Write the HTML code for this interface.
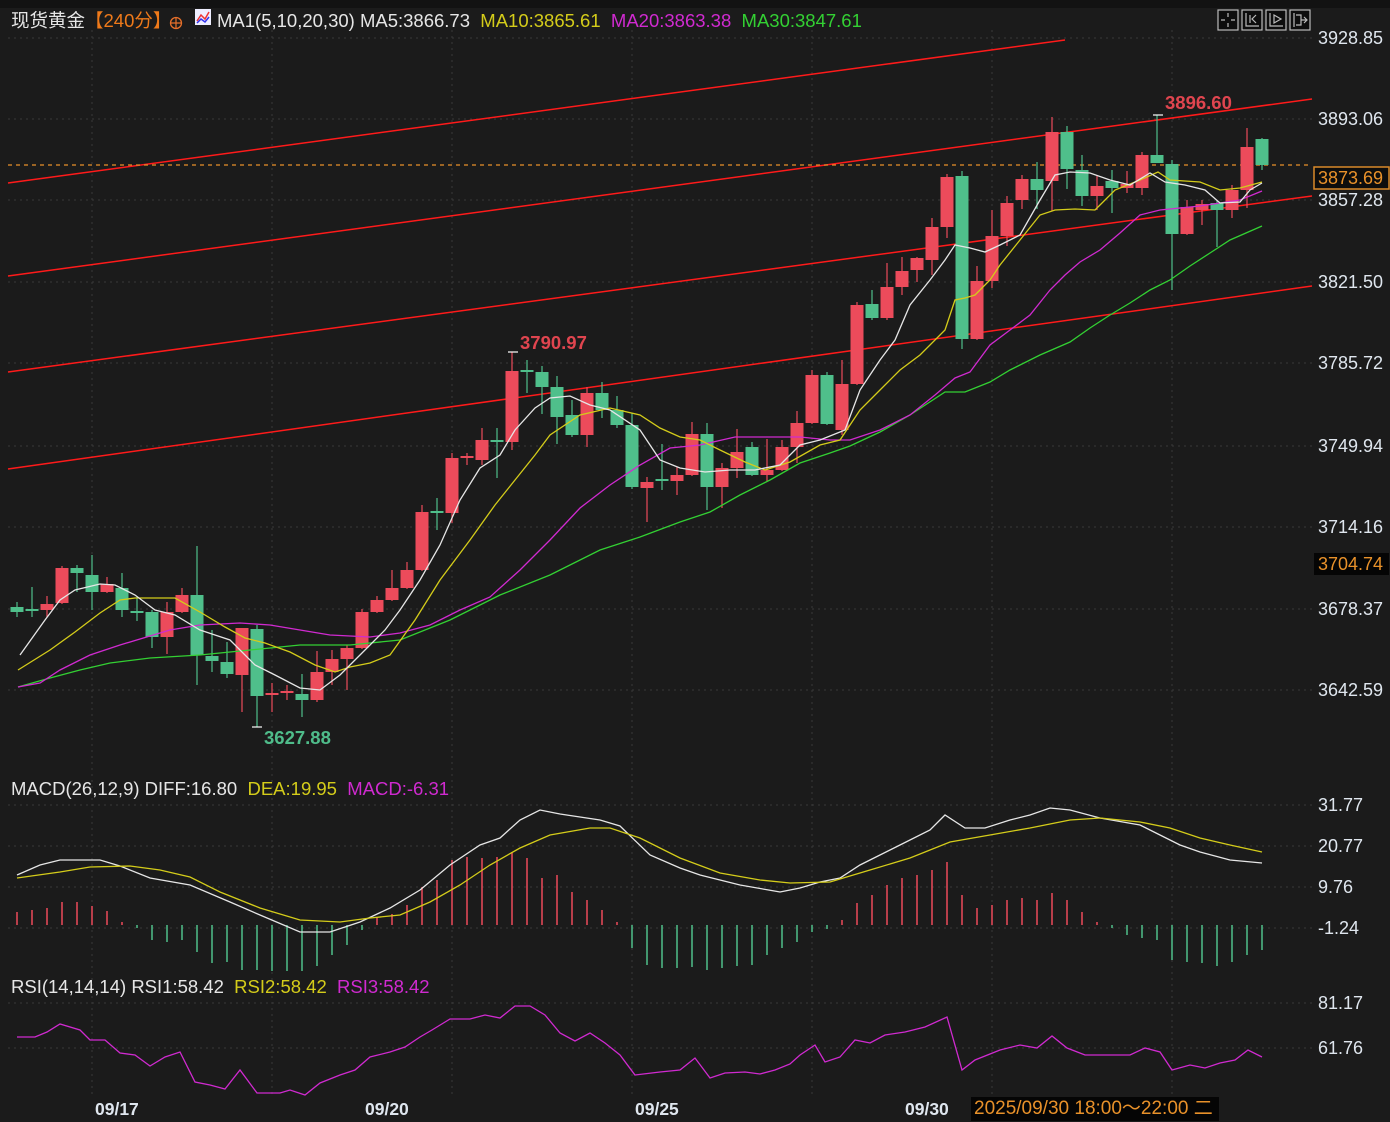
<!DOCTYPE html>
<html><head><meta charset="utf-8"><style>
html,body{margin:0;padding:0;background:#1b1b1b;}
body{width:1390px;height:1122px;overflow:hidden;position:relative;font-family:"Liberation Sans","Noto Sans CJK SC",sans-serif;}
svg{position:absolute;left:0;top:0;}
.t{position:absolute;font-size:18.5px;white-space:nowrap;line-height:20px;}
.ax{position:absolute;left:1318px;font-size:18px;color:#dfe6ee;line-height:18px;}
.xl{position:absolute;top:1099px;font-size:17.5px;font-weight:bold;color:#dfe6ee;}
</style></head><body>
<svg width="1390" height="1122" id="s">
<rect x="0" y="0" width="1390" height="8" fill="#121212"/>
<g stroke="#3a3a3a" stroke-width="1" stroke-dasharray="2,4">
<line x1="8" y1="38" x2="1312" y2="38"/><line x1="8" y1="119" x2="1312" y2="119"/><line x1="8" y1="200" x2="1312" y2="200"/><line x1="8" y1="282" x2="1312" y2="282"/><line x1="8" y1="363" x2="1312" y2="363"/><line x1="8" y1="446" x2="1312" y2="446"/><line x1="8" y1="527" x2="1312" y2="527"/><line x1="8" y1="609" x2="1312" y2="609"/><line x1="8" y1="690" x2="1312" y2="690"/>
<line x1="8" y1="805" x2="1312" y2="805"/><line x1="8" y1="846" x2="1312" y2="846"/><line x1="8" y1="887" x2="1312" y2="887"/><line x1="8" y1="928" x2="1312" y2="928"/>
<line x1="8" y1="1003" x2="1312" y2="1003"/><line x1="8" y1="1048" x2="1312" y2="1048"/>
<line x1="92" y1="30" x2="92" y2="1095"/><line x1="272" y1="30" x2="272" y2="1095"/><line x1="452" y1="30" x2="452" y2="1095"/><line x1="632" y1="30" x2="632" y2="1095"/><line x1="812" y1="30" x2="812" y2="1095"/><line x1="992" y1="30" x2="992" y2="1095"/><line x1="1172" y1="30" x2="1172" y2="1095"/>
</g>
<g stroke="#ff1a1a" stroke-width="1.5" fill="none">
<line x1="8" y1="183" x2="1065" y2="40"/>
<line x1="8" y1="276" x2="1312" y2="99"/>
<line x1="8" y1="372" x2="1312" y2="196"/>
<line x1="8" y1="469" x2="1312" y2="286"/>
</g>
<line x1="8" y1="165" x2="1312" y2="165" stroke="#e8912a" stroke-width="1.2" stroke-dasharray="4,4"/>
<g id="cd"></g>
<g fill="none" stroke-width="1.3">
<polyline stroke="#33d033" points="18,687 50,678 80,670 110,663 150,658 200,655 250,650 300,645 350,645 400,640 450,620 500,595 550,575 600,550 640,537 680,522 710,512 740,495 770,480 800,463 830,453 850,446 880,432 910,415 945,392 965,392 990,382 1010,370 1040,355 1070,342 1090,328 1110,315 1130,303 1150,290 1170,280 1190,266 1210,253 1230,240 1262,226"/>
<polyline stroke="#d02ad0" points="18,687 40,683 60,670 90,655 120,645 150,636 170,630 200,625 240,623 270,625 300,630 330,635 370,637 400,633 430,625 460,610 490,597 520,570 550,540 580,508 610,485 640,465 670,448 700,445 735,437 770,437 800,437 830,440 850,440 880,430 910,415 935,395 955,378 970,372 990,345 1010,330 1030,315 1050,290 1065,275 1080,262 1100,250 1120,233 1140,215 1160,210 1180,208 1200,206 1220,203 1240,200 1262,191"/>
<polyline stroke="#d4cc1a" points="18,670 50,650 75,632 100,613 120,600 135,598 150,598 175,598 200,612 225,627 245,638 265,643 290,652 315,665 335,672 350,667 370,663 390,655 415,620 440,580 470,540 495,505 515,480 535,455 550,435 580,415 610,408 640,415 660,428 680,437 700,440 720,450 745,462 765,470 790,462 820,445 840,440 860,410 880,390 900,370 920,355 945,330 955,300 965,298 975,295 990,280 1000,265 1020,240 1040,215 1055,210 1075,209 1095,210 1100,205 1115,190 1140,180 1158,172 1170,180 1200,182 1220,190 1240,188 1262,182"/>
<polyline stroke="#e6e6e6" points="20,655 45,620 60,600 75,590 100,584 115,585 135,595 155,610 175,615 200,630 230,640 255,665 275,675 300,688 320,690 340,675 360,655 385,630 400,610 420,580 440,545 460,500 480,468 500,455 515,430 535,408 550,398 570,396 590,405 610,410 640,430 660,460 680,468 705,472 730,470 755,470 780,465 800,445 820,440 845,430 860,390 880,360 895,340 910,305 930,280 945,260 955,245 970,248 985,252 1000,245 1020,235 1040,200 1055,175 1070,172 1090,173 1110,180 1130,185 1150,173 1165,182 1185,185 1205,190 1220,203 1240,202 1250,190 1262,183"/>
</g>
<g stroke="#fff" stroke-width="1.2"><line x1="508" y1="352" x2="518" y2="352"/><line x1="1153" y1="115" x2="1163" y2="115"/><line x1="252" y1="727" x2="262" y2="727"/></g>
<g id="hb"></g>
<g fill="none" stroke-width="1.3">
<polyline stroke="#e6e6e6" points="17,875 40,865 60,860 100,860 120,866 150,878 190,885 230,902 260,915 300,932 330,932 360,922 390,908 420,890 450,865 480,845 500,838 520,820 540,810 560,814 600,820 620,826 650,855 680,868 700,875 740,885 780,892 800,888 820,882 840,878 860,865 900,845 930,830 945,815 965,828 985,828 1010,820 1030,815 1050,808 1070,810 1100,818 1140,825 1160,835 1180,845 1200,852 1230,860 1262,863"/>
<polyline stroke="#d4cc1a" points="17,878 60,872 90,867 130,866 160,870 190,877 220,892 260,908 300,920 340,922 370,918 400,915 430,902 460,885 490,865 520,848 550,835 590,828 610,828 640,838 680,858 720,873 760,880 790,883 830,882 870,870 910,858 950,842 990,835 1030,828 1070,820 1100,818 1140,822 1170,828 1200,838 1230,845 1262,852"/>
<polyline stroke="#d02ad0" points="17,1037 35,1037 47,1032 60,1024 80,1030 90,1040 105,1040 120,1053 135,1055 150,1066 165,1057 180,1052 195,1082 210,1085 225,1089 240,1070 257,1093 280,1093 290,1090 305,1095 320,1083 340,1075 355,1070 370,1057 390,1052 405,1047 420,1037 432,1030 450,1019 470,1019 485,1015 500,1018 515,1006 530,1006 545,1015 560,1033 575,1041 590,1033 605,1043 620,1055 635,1075 660,1072 680,1070 695,1058 710,1078 725,1073 745,1072 760,1074 775,1070 790,1064 800,1055 815,1045 825,1062 840,1057 855,1040 870,1043 885,1035 905,1032 925,1027 947,1017 962,1070 975,1060 1000,1050 1020,1045 1037,1048 1052,1036 1067,1048 1085,1055 1110,1055 1130,1055 1145,1048 1160,1052 1172,1070 1190,1065 1205,1068 1220,1063 1235,1060 1248,1050 1262,1057"/>
</g>
<g fill="none" stroke="#bbb" stroke-width="1.2">
<rect x="1218" y="10" width="20" height="20" fill="#0d0d0d"/><rect x="1242" y="10" width="20" height="20" fill="#0d0d0d"/><rect x="1266" y="10" width="20" height="20" fill="#0d0d0d"/><rect x="1290" y="10" width="20" height="20" fill="#0d0d0d"/>
<path d="M1228 13v4M1228 23v4M1221 20h4M1231 20h4"/>
<path d="M1246 13v13h13M1250 15v8M1256 15l-4 4 4 4"/>
<path d="M1270 13v13h13M1274 15l7 4-7 4z"/>
<path d="M1294 13v14M1296 15h5v10h-5M1301 20h6M1304 17l3 3-3 3"/>
</g>
<rect x="1314" y="167" width="75" height="22" fill="#0d0d0d" stroke="#d98a2a" stroke-width="1.5"/>
<rect x="1314" y="553" width="75" height="22" fill="#050505"/>
<rect x="971" y="1097" width="248" height="24" fill="#050505"/>
<rect x="195" y="9" width="16" height="16" fill="#eef"/>
<polyline points="197,21 201,15 205,19 209,12" fill="none" stroke="#e33" stroke-width="1.5"/>
<polyline points="197,23 201,19 205,22 209,17" fill="none" stroke="#33e" stroke-width="1.5"/>
<circle cx="176" cy="23" r="5.5" fill="none" stroke="#e8702a" stroke-width="1.3"/><path d="M170.5 23h11M176 17.5v11" stroke="#e8702a" stroke-width="1.2"/>
</svg>

<div class="t" style="left:11px;top:11px;color:#e6e6e6">现货黄金<span style="color:#ef7a1a">【240分】</span></div>
<div class="t" style="left:217px;top:11px;color:#e6e6e6">MA1(5,10,20,30) MA5:3866.73 <span style="color:#d4cc1a">&nbsp;MA10:3865.61</span> <span style="color:#d02ad0">&nbsp;MA20:3863.38</span> <span style="color:#33d033">&nbsp;MA30:3847.61</span></div>
<div class="t" style="left:11px;top:779px;color:#e6e6e6">MACD(26,12,9) DIFF:16.80 <span style="color:#d4cc1a">&nbsp;DEA:19.95</span> <span style="color:#d02ad0">&nbsp;MACD:-6.31</span></div>
<div class="t" style="left:11px;top:977px;color:#e6e6e6">RSI(14,14,14) RSI1:58.42 <span style="color:#d4cc1a">&nbsp;RSI2:58.42</span> <span style="color:#d02ad0">&nbsp;RSI3:58.42</span></div>
<div class="t" style="left:1165px;top:93px;color:#e0454f;font-weight:bold;font-size:18.5px">3896.60</div>
<div class="t" style="left:520px;top:333px;color:#e0454f;font-weight:bold;font-size:18.5px">3790.97</div>
<div class="t" style="left:264px;top:728px;color:#4fbc8a;font-weight:bold;font-size:18.5px">3627.88</div>
<div class="ax" style="top:29px">3928.85</div>
<div class="ax" style="top:110px">3893.06</div>
<div class="ax" style="top:169px;color:#e8912a">3873.69</div>
<div class="ax" style="top:191px">3857.28</div>
<div class="ax" style="top:273px">3821.50</div>
<div class="ax" style="top:354px">3785.72</div>
<div class="ax" style="top:437px">3749.94</div>
<div class="ax" style="top:518px">3714.16</div>
<div class="ax" style="top:555px;color:#e8912a">3704.74</div>
<div class="ax" style="top:600px">3678.37</div>
<div class="ax" style="top:681px">3642.59</div>
<div class="ax" style="top:796px">31.77</div>
<div class="ax" style="top:837px">20.77</div>
<div class="ax" style="top:878px">9.76</div>
<div class="ax" style="top:919px">-1.24</div>
<div class="ax" style="top:994px">81.17</div>
<div class="ax" style="top:1039px">61.76</div>
<div class="xl" style="left:95px">09/17</div>
<div class="xl" style="left:365px">09/20</div>
<div class="xl" style="left:635px">09/25</div>
<div class="xl" style="left:905px">09/30</div>
<div class="t" style="left:974px;top:1099px;color:#e8912a;font-size:19px">2025/09/30 18:00～22:00 二</div>
<script>
var C=[[17,607,612,602,617,'g'],[32,609,611,587,617,'g'],[47,604,610,596,617,'r'],[62,568,603,566,604,'r'],[77,568,573,565,592,'g'],[92,575,592,555,610,'g'],[107,584,592,577,593,'r'],[122,588,610,573,617,'g'],[137,611,613,597,621,'g'],[152,612,637,610,648,'g'],[167,612,637,602,654,'r'],[182,595,612,588,613,'r'],[197,595,655,546,685,'g'],[212,656,661,630,672,'g'],[227,662,674,642,678,'g'],[242,628,675,628,712,'r'],[257,629,696,625,727,'g'],[272,693,695,683,712,'r'],[287,691,693,685,700,'r'],[302,694,700,674,717,'g'],[317,672,700,651,702,'r'],[332,659,672,650,685,'r'],[347,648,659,645,690,'r'],[362,612,648,609,649,'r'],[377,600,612,596,613,'r'],[392,588,600,570,601,'r'],[407,570,588,562,589,'r'],[422,512,570,505,571,'r'],[437,511,513,498,530,'g'],[452,458,513,453,523,'r'],[467,456,458,453,465,'r'],[482,440,460,428,465,'r'],[497,440,442,428,478,'g'],[512,371,442,352,450,'r'],[527,370,372,360,393,'g'],[542,372,387,366,414,'g'],[557,387,417,376,444,'g'],[572,415,435,400,437,'g'],[587,393,435,387,447,'r'],[602,393,410,382,418,'g'],[617,410,425,396,428,'g'],[632,425,487,413,489,'g'],[647,482,488,477,522,'r'],[662,479,481,444,490,'g'],[677,475,481,467,495,'r'],[692,434,475,422,476,'r'],[707,434,487,423,510,'g'],[722,468,487,463,508,'r'],[737,452,468,429,478,'r'],[752,447,475,442,476,'g'],[767,470,475,439,482,'r'],[782,447,470,440,471,'r'],[797,423,447,411,463,'r'],[812,375,423,370,424,'r'],[827,375,424,372,425,'g'],[842,384,430,360,435,'r'],[857,305,384,302,385,'r'],[872,304,318,290,320,'g'],[887,287,318,263,320,'r'],[902,271,287,257,295,'r'],[917,258,270,257,282,'r'],[932,227,260,218,275,'r'],[947,177,227,174,238,'r'],[962,176,339,171,349,'g'],[977,281,339,266,340,'r'],[992,236,281,210,288,'r'],[1007,203,236,196,246,'r'],[1022,179,200,175,209,'r'],[1037,179,190,162,209,'g'],[1052,132,181,117,211,'r'],[1067,132,169,126,189,'g'],[1082,170,196,155,206,'g'],[1097,186,196,175,210,'r'],[1112,181,188,170,213,'g'],[1127,184,188,171,193,'r'],[1142,155,188,152,195,'r'],[1157,155,163,115,163,'g'],[1172,164,234,160,290,'g'],[1187,207,234,200,235,'r'],[1202,204,210,200,225,'r'],[1217,203,210,200,247,'g'],[1232,190,210,185,218,'r'],[1247,147,190,128,208,'r'],[1262,139,165,138,170,'g']];
var NS='http://www.w3.org/2000/svg',g=document.getElementById('cd'),h=document.getElementById('hb');
function el(p,t,a){var e=document.createElementNS(NS,t);for(var k in a)e.setAttribute(k,a[k]);p.appendChild(e);}
C.forEach(function(c){var col=c[5]=='r'?'#ec4b5b':'#4fbf8b';el(g,'line',{x1:c[0],x2:c[0],y1:c[3],y2:c[4],stroke:col,'stroke-width':1.2});var ht=Math.max(c[2]-c[1],1.5);el(g,'rect',{x:c[0]-6.5,y:c[1],width:13,height:ht,fill:col});});
var H=[912,910,908,902,902,906,911,922,928,940,942,940,952,963,962,970,970,971,971,971,966,955,945,930,917,914,905,887,880,860,857,858,857,852,858,878,875,892,900,910,922,948,965,968,968,967,970,968,966,965,955,948,942,932,929,920,903,895,885,878,875,870,862,895,908,905,900,898,900,893,900,912,922,928,935,938,940,960,962,963,966,962,955,950];
var Z=925;H.forEach(function(y,i){var x=17+15*i;var col=y<Z?'#ec4b5b':'#4fbf8b';el(h,'line',{x1:x,x2:x,y1:Z,y2:y,stroke:col,'stroke-width':1.5});});
</script>
</body></html>
